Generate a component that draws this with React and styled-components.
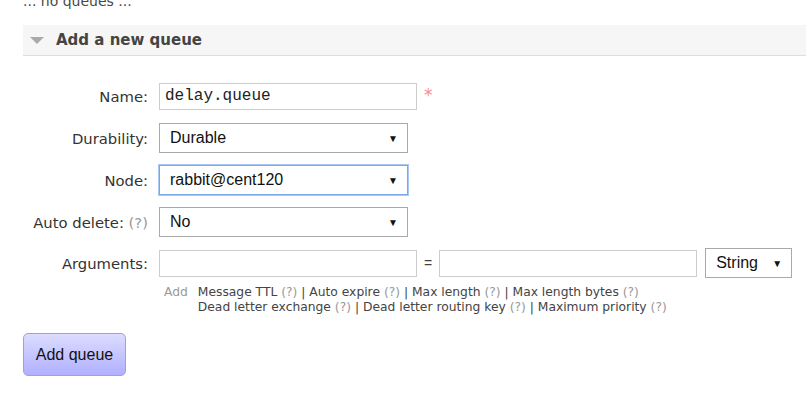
import React from 'react'
import styled, { createGlobalStyle } from 'styled-components'

const GlobalStyle = createGlobalStyle`
    body {
        margin: 0;
        background: #fff;
        font-family: "DejaVu Sans", Verdana, sans-serif;
        color: #484848;
        overflow: hidden;
    }
`

const Page = styled.div`
    padding-left: 23px;
`

const Empty = styled.p`
    margin: -7px 0 0;
    font-size: 14px;
    line-height: 16px;
    color: #484848;
`

const SectionHeader = styled.div`
    margin-top: 16px;
    height: 30px;
    background: #f6f6f6;
    border-bottom: 1px solid #ddd;
    display: flex;
    align-items: center;
    padding-left: 7px;
    gap: 12px;
`

const Toggle = styled.span`
    width: 0;
    height: 0;
    border-left: 7px solid transparent;
    border-right: 7px solid transparent;
    border-top: 7px solid #aaa;
`

const Title = styled.h2`
    margin: 0;
    font-size: 15px;
    font-weight: bold;
    color: #444;
`

const Form = styled.div`
    margin-top: 19px;
`

const Row = styled.div`
    display: flex;
    align-items: center;
    height: ${p => p.$height || 42}px;
    gap: 11px;
`

const Label = styled.label`
    width: 125px;
    flex-shrink: 0;
    text-align: right;
    font-size: 14.8px;
    color: #333;
    white-space: nowrap;
`

const Help = styled.span`
    color: #999;
`

const TextInput = styled.div`
    box-sizing: border-box;
    width: ${p => p.$width || 258}px;
    height: 27px;
    border: 1px solid #ccc;
    padding: 0 5px;
    display: flex;
    align-items: center;
    font-family: "Liberation Mono", "Courier New", monospace;
    font-size: 16px;
    color: #222;
`

const Required = styled.span`
    color: #f88;
    font-size: 17px;
    margin-left: -4px;
    align-self: flex-start;
    margin-top: 10px;
`

const SelectBox = styled.div`
    box-sizing: border-box;
    width: ${p => p.$width || 249}px;
    height: 30px;
    margin-left: ${p => p.$offset || 0}px;
    border: 1px solid ${p => (p.$focused ? '#7aa7e8' : '#aaa')};
    box-shadow: ${p => (p.$focused ? '0 0 0 1px #a9c8f3' : 'none')};
    padding: 0 9px 0 10px;
    display: flex;
    align-items: center;
    justify-content: space-between;
    font-family: "Liberation Sans", Arial, sans-serif;
    font-size: 16px;
    color: #111;
`

const Arrow = styled.span`
    font-size: 10px;
    color: #111;
`

const Equals = styled.span`
    font-family: "Liberation Sans", Arial, sans-serif;
    font-size: 14px;
    color: #444;
    margin: 0 -4px;
`

const Hints = styled.div`
    display: flex;
    margin: 2px 0 0 141px;
    font-size: 12.3px;
    line-height: 15px;
    color: #444;
    gap: 10px;
    white-space: nowrap;
`

const AddWord = styled.span`
    color: #999;
`

const HintLines = styled.div`
    display: flex;
    flex-direction: column;
`

const Button = styled.button`
    margin-top: 18px;
    width: 103px;
    height: 43px;
    border: 1px solid #9f9fe0;
    border-radius: 5px;
    background: linear-gradient(#dcdcff, #b0b0ff);
    font-family: "Liberation Sans", Arial, sans-serif;
    font-size: 16px;
    color: #111;
    padding: 0;
`

const Select = ({ value, width, focused, offset }) => (
    <SelectBox $width={width} $focused={focused} $offset={offset}>
        <span>{value}</span>
        <Arrow>▼</Arrow>
    </SelectBox>
)

const hint = name => (
    <>
        {name} <Help>(?)</Help>
    </>
)

const App = () => {
    return (
        <Page>
            <GlobalStyle />
            <Empty>... no queues ...</Empty>
            <SectionHeader>
                <Toggle />
                <Title>Add a new queue</Title>
            </SectionHeader>
            <Form>
                <Row>
                    <Label>Name:</Label>
                    <TextInput>delay.queue</TextInput>
                    <Required>*</Required>
                </Row>
                <Row>
                    <Label>Durability:</Label>
                    <Select value="Durable" />
                </Row>
                <Row>
                    <Label>Node:</Label>
                    <Select value="rabbit@cent120" focused />
                </Row>
                <Row>
                    <Label>
                        Auto delete: <Help>(?)</Help>
                    </Label>
                    <Select value="No" />
                </Row>
                <Row $height={40}>
                    <Label>Arguments:</Label>
                    <TextInput />
                    <Equals>=</Equals>
                    <TextInput />
                    <Select value="String" width={87} offset={-3} />
                </Row>
                <Hints>
                    <AddWord>Add</AddWord>
                    <HintLines>
                        <span>
                            {hint('Message TTL')} | {hint('Auto expire')} | {hint('Max length')} | {hint('Max length bytes')}
                        </span>
                        <span>
                            {hint('Dead letter exchange')} | {hint('Dead letter routing key')} | {hint('Maximum priority')}
                        </span>
                    </HintLines>
                </Hints>
            </Form>
            <Button>Add queue</Button>
        </Page>
    )
}

export default App
